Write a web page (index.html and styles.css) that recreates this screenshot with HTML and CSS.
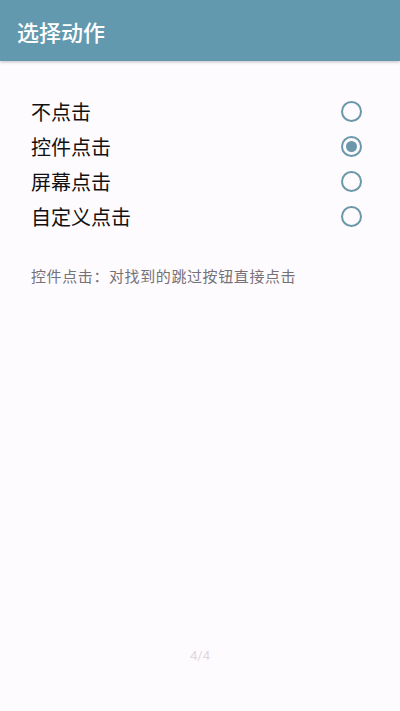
FILE: index.html
```html
<!DOCTYPE html>
<html lang="zh">
<head>
<meta charset="utf-8">
<link rel="stylesheet" href="styles.css">
</head>
<body>
<div class="app">
  <header class="bar"><h1 class="title">选择动作</h1></header>
  <main class="content">
    <div class="options">
      <label class="option"><span class="label">不点击</span><span class="radio"></span></label>
      <label class="option"><span class="label">控件点击</span><span class="radio checked"></span></label>
      <label class="option"><span class="label">屏幕点击</span><span class="radio"></span></label>
      <label class="option"><span class="label">自定义点击</span><span class="radio"></span></label>
    </div>
    <p class="desc">控件点击：对找到的跳过按钮直接点击</p>
  </main>
  <footer class="pager">4/4</footer>
</div>
</body>
</html>
```
FILE: styles.css
```css
* { box-sizing: border-box; }
html, body { margin: 0; padding: 0; }
body {
  background: #fefbfe;
  font-family: Roboto, "Noto Sans CJK SC", sans-serif;
  width: 400px;
  height: 711px;
  overflow: hidden;
}
.app {
  display: flex;
  flex-direction: column;
  height: 711px;
}
.bar {
  height: 61px;
  background: #6399ae;
  display: flex;
  align-items: center;
  padding-left: 17px;
  box-shadow: 0 1px 3px rgba(0,0,0,0.25);
  flex: none;
}
.title {
  margin: 0;
  font-size: 22px;
  font-weight: 500;
  color: #ffffff;
}
.content {
  flex: 1;
  padding: 33px 29px 0 31px;
}
.options {
  display: flex;
  flex-direction: column;
}
.option {
  height: 35px;
  display: flex;
  align-items: center;
  justify-content: space-between;
}
.label {
  font-size: 20px;
  color: #111111;
}
.radio {
  width: 21px;
  height: 21px;
  border: 2px solid #6a98a8;
  border-radius: 50%;
  margin-right: 9px;
  display: flex;
  align-items: center;
  justify-content: center;
}
.radio.checked::after {
  content: "";
  width: 11px;
  height: 11px;
  border-radius: 50%;
  background: #6a98a8;
}
.desc {
  margin: 31px 0 0;
  font-size: 15px;
  letter-spacing: 0.6px;
  color: #747278;
}
.pager {
  flex: none;
  height: 70px;
  text-align: center;
  font-size: 13px;
  color: #dcd8dc;
  padding-top: 7px;
}
```
